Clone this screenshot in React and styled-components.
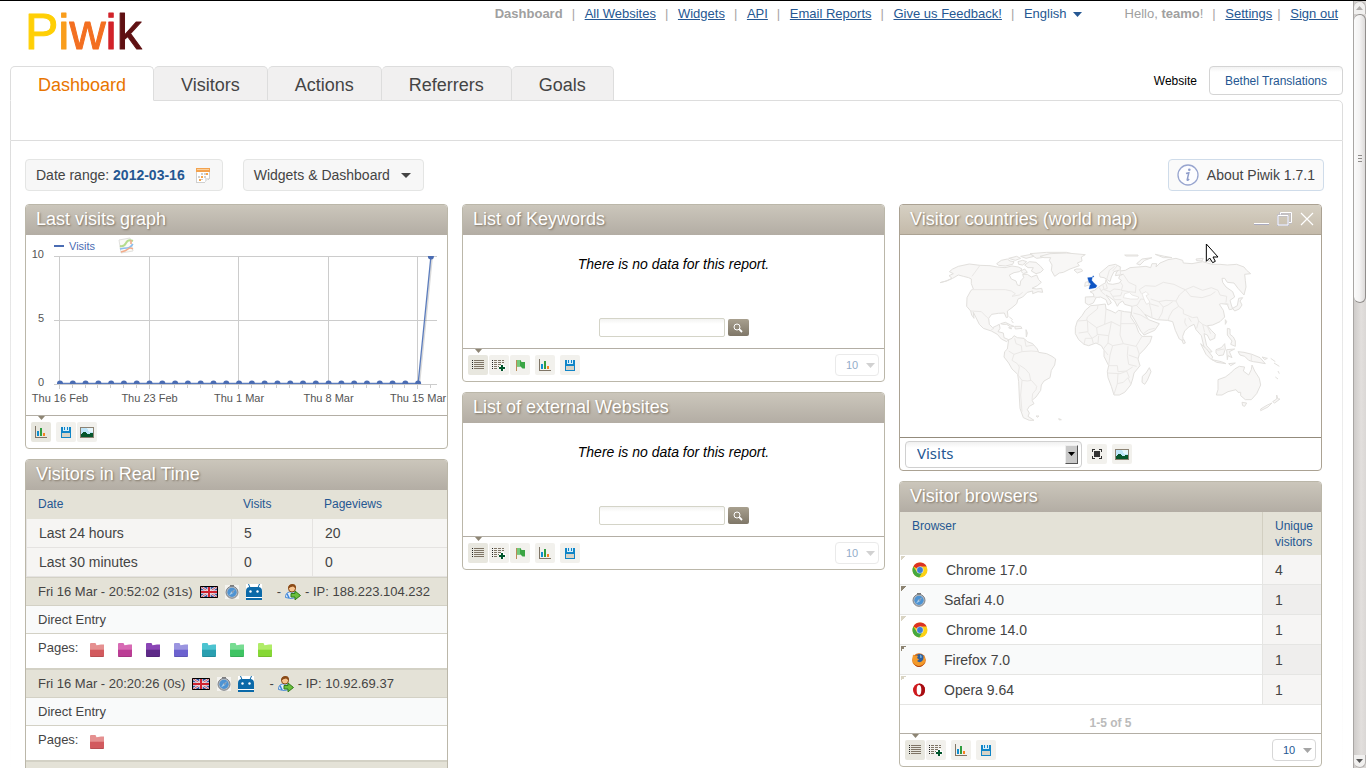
import React from "react";
import styled, { createGlobalStyle, css } from "styled-components";

const GlobalStyle = createGlobalStyle`
  *, *::before, *::after { box-sizing: border-box; }
  body {
    margin: 0;
    background: #fff;
    color: #444;
    font-family: "Liberation Sans", Arial, sans-serif;
    font-size: 14px;
  }
  button, input, select { font-family: inherit; margin: 0; }
  svg { display: block; flex: none; }
`;

/* ---------- page frame ---------- */

const Shell = styled.div`
  display: flex;
  height: 100vh;
  overflow: hidden;
  border-top: 1px solid #000;
`;

const Page = styled.div`
  flex: 1;
  min-width: 0;
  padding: 0 10px;
`;

const ScrollRail = styled.div`
  width: 13px;
  flex: none;
  display: flex;
  flex-direction: column;
  border-left: 1px solid #a9a6a4;
  background: linear-gradient(90deg, #cfccca, #e2dfdd 60%, #dad7d5);
`;

const RailButton = styled.div`
  height: 13px;
  display: flex;
  align-items: center;
  justify-content: center;
  background: #f1f0ef;
  border: 1px solid #b5b2b0;
  border-width: ${(p) => (p.$end ? "0 1px 1px 0" : "1px 1px 0 0")};
  border-radius: ${(p) => (p.$end ? "0 0 6px 6px" : "6px 6px 0 0")};
`;

const RailTrack = styled.div`
  flex: 1;
`;

const RailThumb = styled.div`
  height: 39%;
  display: flex;
  flex-direction: column;
  align-items: center;
  justify-content: center;
  gap: 2px;
  border: 1px solid #918e8c;
  border-left: 0;
  border-radius: 6px;
  background: linear-gradient(90deg, #fbfbfb, #f4f3f3 50%, #dddbda);
`;

const Grip = styled.span`
  width: 4px;
  height: 1px;
  background: #8f8c8a;
`;

/* ---------- header ---------- */

const Header = styled.header`
  display: flex;
  justify-content: space-between;
  align-items: flex-start;
  height: 65px;
  padding: 0 5px 0 10px;
`;

const TopLinks = styled.nav`
  display: flex;
  align-items: center;
  padding-top: 5px;
  font-size: 13px;
  line-height: 16px;
  color: #a0a0a0;
`;

const TopGroup = styled.div`
  display: flex;
  align-items: center;
  gap: 9px;
`;

const UserGroup = styled(TopGroup)`
  margin-left: 43px;
`;

const TopLink = styled.a`
  color: #255792;
`;

const LanguageButton = styled.button`
  display: flex;
  align-items: center;
  gap: 6px;
  padding: 0;
  border: 0;
  background: none;
  color: #255792;
  font-size: 13px;
  line-height: 16px;
`;

const Bar = styled.span`
  color: #a9a3a3;
  width: 4px;
  margin-left: ${(p) => (p.$tight ? "-4px" : "0")};
`;

/* ---------- tabs ---------- */

const TabRow = styled.div`
  display: flex;
  justify-content: space-between;
  align-items: flex-start;
  position: relative;
  z-index: 1;
  margin-bottom: -1px;
`;

const Tabs = styled.nav`
  display: flex;
`;

const Tab = styled.a`
  height: 35px;
  padding: 0 27px;
  border: 1px solid #ddd;
  border-left-width: ${(p) => (p.$active ? "1px" : "0")};
  border-bottom-color: ${(p) => (p.$active ? "#fff" : "#ddd")};
  border-radius: 5px 5px 0 0;
  background: ${(p) => (p.$active ? "#fff" : "#f1f0f0")};
  color: ${(p) => (p.$active ? "#e87500" : "#444")};
  font-size: 18px;
  line-height: 36px;
  text-decoration: none;
`;

const SiteSelector = styled.div`
  display: flex;
  align-items: center;
  gap: 12px;
  font-size: 12px;
  color: #000;
`;

const SiteButton = styled.button`
  height: 29px;
  padding: 0 15px;
  border: 1px solid #d4d4d4;
  border-radius: 4px;
  background: linear-gradient(#f2f2f2, #fff 5px);
  color: #255792;
  font-size: 12px;
`;

/* ---------- content panel ---------- */

const SubBar = styled.div`
  height: 41px;
  border: 1px solid #ddd;
  border-top-right-radius: 5px;
`;

const Panel = styled.main`
  padding: 18px 20px 0 14px;
  border: 0 solid;
  border-width: 0 1px;
  border-image: linear-gradient(#ddd, #fff 630px) 1;
`;

const Toolbar = styled.div`
  display: flex;
  gap: 20px;
  margin: 0 -2px 13px 0;
`;

const ToolButton = styled.button`
  display: flex;
  align-items: center;
  gap: 11px;
  height: 32px;
  padding: 0 12px 0 10px;
  border: 1px solid ${(p) => (p.$info ? "#cfdcea" : "#e4e5e4")};
  border-radius: 4px;
  background: ${(p) => (p.$info ? "#fafafa" : "#f7f7f7")};
  color: #444;
  font-size: 14px;
  ${(p) => p.$info && css`
    gap: 8px;
    margin-left: auto;
    padding: 0 8px;
  `}
  b { color: #255792; }
`;

const Columns = styled.div`
  display: grid;
  grid-template-columns: repeat(3, minmax(0, 1fr));
  align-items: start;
  gap: 14px;
`;

const Column = styled.div`
  display: grid;
  gap: 10px;
`;

/* ---------- widgets ---------- */

const WidgetBox = styled.section`
  border: 1px solid ${(p) => (p.$hover ? "#aba293" : "#bbb7a9")};
  border-radius: 4px;
  overflow: hidden;
  background: #fff;
`;

const WidgetHead = styled.header`
  display: flex;
  align-items: center;
  justify-content: space-between;
  height: 30px;
  padding: 0 7px 2px 10px;
  background: ${(p) =>
    p.$hover
      ? "linear-gradient(#d6d0c3, #c4baaa)"
      : "linear-gradient(#cbc6bb, #b3ada4)"};
  ${(p) => p.$hover && css`
    padding-bottom: 1px;
    border-bottom: 1px solid #aba293;
  `}
`;

const WidgetTitle = styled.h2`
  margin: 0;
  color: #fff;
  font-size: 18px;
  font-weight: normal;
  line-height: 24px;
  text-shadow: 1px 1px 2px #7e7363;
`;

const WindowButtons = styled.div`
  display: flex;
  align-items: center;
  gap: 8px;
`;

const PlainButton = styled.button`
  display: block;
  padding: 0;
  border: 0;
  background: none;
`;

const Footer = styled.footer`
  position: relative;
  display: flex;
  align-items: center;
  gap: 5px;
  height: 33px;
  padding: 0 5px;
  border-top: 1px solid ${(p) => (p.$hover ? "#938b7c" : "#b3aea5")};
`;

const ActiveMark = styled.svg`
  position: absolute;
  left: 12px;
  top: 0;
`;

const IconGroup = styled.div`
  display: flex;
  gap: 1px;
`;

const IconButton = styled.button`
  display: flex;
  align-items: center;
  justify-content: center;
  width: 20px;
  height: 20px;
  padding: 0;
  border: 0;
  border-radius: 2px;
  background: ${(p) => (p.$active ? "#e8e7df" : "#f2f1ed")};
`;

const LimitWrap = styled.div`
  position: relative;
  margin-left: auto;
  opacity: ${(p) => (p.$dim ? 0.5 : 1)};
`;

const LimitSelect = styled.select`
  display: block;
  appearance: none;
  width: 44px;
  height: 22px;
  padding: 0 0 1px 10px;
  border: 1px solid #d7d7d7;
  border-radius: 4px;
  background: #fff;
  color: #255792;
  font-size: 11px;
  opacity: 1;
`;

const LimitArrow = styled.svg`
  position: absolute;
  right: 4px;
  top: 9px;
  pointer-events: none;
`;

const EmptyBody = styled.div`
  display: flex;
  flex-direction: column;
  align-items: center;
  justify-content: space-between;
  height: 113px;
  padding: 20px 0 11px;
  color: #000;
`;

const EmptyText = styled.em`
  line-height: 18px;
`;

const SearchForm = styled.form`
  display: flex;
  align-items: center;
  gap: 3px;
`;

const SearchInput = styled.input`
  width: 126px;
  height: 19px;
  padding: 0 4px;
  border: 1px solid #d4d4c8;
  border-radius: 2px;
  background: linear-gradient(#f3f3f1, #fff 5px);
  font-size: 12px;
`;

const SearchButton = styled.button`
  display: flex;
  align-items: center;
  justify-content: center;
  width: 21px;
  height: 17px;
  padding: 0;
  border: 0;
  border-radius: 2px;
  background: linear-gradient(#a8a08f, #7f7768);
`;

const Table = styled.table`
  width: 100%;
  table-layout: fixed;
  border-collapse: separate;
  border-spacing: 0;
  text-align: left;
`;

const HeadCell = styled.th`
  width: ${(p) => p.$width || "auto"};
  height: ${(p) => (p.$tall ? "43px" : "29px")};
  padding: 6px 0 0 12px;
  border-left: ${(p) => (p.$divided ? "1px solid #d2cfc1" : "0")};
  background: #e4e2d7;
  color: #255792;
  font-size: 12px;
  font-weight: normal;
  line-height: 16px;
  vertical-align: top;
`;

const SummaryCell = styled.td`
  height: 29px;
  padding: 0 0 0 12px;
  border: 0 solid #e5e3e1;
  border-width: 0 0 1px 1px;
  background: #f6f5f3;
  line-height: 16px;
`;

const BrowserRow = styled.tr`
  td {
    height: 30px;
    padding: 0 0 0 12px;
    border-bottom: 1px solid #e5e5e3;
    line-height: 16px;
  }
  td:first-child {
    background:
      linear-gradient(135deg, ${(p) => (p.$even ? "#8d8472" : "#d9d4c3")} 50%, transparent 50%) 1px 1px / 5px 5px no-repeat,
      ${(p) => (p.$even ? "#f9fafa" : "#fff")};
  }
  td:last-child {
    border-left: 1px solid #e5e5e3;
    background: ${(p) => (p.$even ? "#efeeed" : "#f6f5f4")};
  }
`;

const BrowserName = styled.span`
  display: flex;
  align-items: center;
  gap: 18px;
`;

const Pager = styled.div`
  height: 28px;
  padding: 10px 0 0;
  color: #bbb;
  font-size: 12px;
  font-weight: bold;
  line-height: 16px;
  text-align: center;
`;

const Visit = styled.article`
  border-top: 1px solid #d3d1c5;
  font-size: 13px;
  line-height: 16px;
`;

const VisitLine = styled.div`
  display: flex;
  align-items: center;
  gap: 7px;
  height: 28px;
  padding: 0 12px;
  border-bottom: 1px solid #d3d1c5;
  white-space: nowrap;
  background: ${(p) => (p.$head ? "#e4e2d7" : "#f9fafa")};
`;

const Visitor = styled.span`
  display: flex;
  align-items: center;
  gap: 4px;
  margin-left: 8px;
`;

const PagesLine = styled.div`
  display: flex;
  align-items: flex-start;
  gap: 12px;
  height: 35px;
  padding: 6px 12px 0;
  border-bottom: 1px solid #d3d1c5;
`;

const Folders = styled.div`
  display: flex;
  gap: 14px;
  padding-top: 3px;
`;

const MetricWrap = styled.div`
  position: relative;
`;

const MetricSelect = styled.select`
  display: block;
  appearance: none;
  width: 177px;
  height: 27px;
  padding: 0 0 2px 11px;
  border: 1px solid #d0d0d0;
  border-radius: 4px;
  background: linear-gradient(#f0f0f0, #fff 6px);
  color: #255792;
  font-family: "Noto Sans", sans-serif;
  font-size: 15px;
`;

const MetricArrow = styled.span`
  position: absolute;
  right: 4px;
  top: 4px;
  display: flex;
  align-items: center;
  justify-content: center;
  width: 13px;
  height: 19px;
  border: 1px solid;
  border-color: #eee #555 #555 #eee;
  background: #c9c9c9;
  pointer-events: none;
`;

/* ---------- small drawings ---------- */

const Triangle = ({ color, width = 9, height = 5 }) => (
  <svg width={width} height={height} viewBox="0 0 10 5" preserveAspectRatio="none" aria-hidden="true">
    <path d="M0 0h10L5 5z" fill={color} />
  </svg>
);

const Logo = () => (
  <svg width="130" height="62" viewBox="20 0 130 62" role="img" aria-label="Piwik">
    <text x="25" y="48" fontFamily="Liberation Sans, Arial, sans-serif" fontSize="50" strokeWidth="1" strokeLinejoin="round">
      <tspan fill="#ffcf05" stroke="#ffcf05">P</tspan>
      <tspan fill="#f99d1c" stroke="#f99d1c">i</tspan>
      <tspan fill="#f36f21" stroke="#f36f21">w</tspan>
      <tspan fill="#d2232a" stroke="#d2232a">i</tspan>
      <tspan fill="#5f1012" stroke="#5f1012">k</tspan>
    </text>
  </svg>
);

const CalendarIcon = () => (
  <svg width="14" height="16" viewBox="0 0 14 16" shapeRendering="crispEdges" aria-hidden="true">
    <path d="M.5 1v14h8.500l4.500-4V1z" fill="#fff" stroke="#cfcfcf" />
    <path d="M0 1h14v4H0z" fill="#f3a24e" />
    <path d="M1 2h12v1H1z" fill="#fbd09c" />
    <path d="M5 6h2v2H5zM8 6h2v2H8zM2 9h2v2H2zM8 9h2v2H8zM5 12h2v1H5z" fill="#cfcfcf" />
    <path d="M10 6h2v2h-2zM5 9h2v2H5zM3 12h2v2H3z" fill="#f5a54b" />
    <path d="M13 11H9v4z" fill="#e2e2e2" />
  </svg>
);

const InfoIcon = () => (
  <svg width="22" height="22" viewBox="0 0 22 22" aria-hidden="true">
    <circle cx="11" cy="11" r="10" fill="#fdfdff" stroke="#98a5cf" strokeWidth="1.3" />
    <circle cx="12.3" cy="5.7" r="1.3" fill="#8e9cca" />
    <path d="M9 9.5l2.8-.8-1.6 7.2q0 1 2-.8" fill="none" stroke="#8e9cca" strokeWidth="1.5" />
  </svg>
);

const TableIcon = () => (
  <svg width="12" height="10" viewBox="0 0 12 10" shapeRendering="crispEdges" aria-hidden="true">
    <path d="M0 .5h1M0 2.500h1M0 4.500h1M0 6.500h1M0 8.500h1" stroke="#222" />
    <path d="M2 .5h10M2 2.500h10M2 4.500h10M2 6.500h10M2 8.500h10" stroke="#7f7566" />
  </svg>
);

const TablePlusIcon = () => (
  <svg width="14" height="12" viewBox="0 0 14 12" shapeRendering="crispEdges" aria-hidden="true">
    <path d="M0 1.500h1M0 3.500h1M0 5.500h1M0 7.500h1M0 9.500h1" stroke="#222" />
    <path d="M2 1.500h3m1 0h3m1 0h2M2 3.500h3m1 0h3m1 0h2M2 5.500h3m1 0h3m1 0h2M2 7.500h3m1 0h1M2 9.500h3" stroke="#7f7566" />
    <path d="M7 7h2V5h3v2h2v3h-2v2H9v-2H7z" fill="#fff" />
    <path d="M7 9h6M10 6v6" stroke="#00552b" strokeWidth="2" />
  </svg>
);

const FlagIcon = () => (
  <svg width="10" height="12" viewBox="0 0 10 12" aria-hidden="true">
    <path d="M1.500 1v11" stroke="#b98a55" strokeWidth="1" />
    <path d="M2 1h3.500l1 2H10v6.500H7.500l-2-2H2z" fill="#3aa544" />
    <path d="M2 1h3v6.500H2z" fill="#74c878" />
  </svg>
);

const BarsIcon = () => (
  <svg width="12" height="12" viewBox="0 0 12 12" shapeRendering="crispEdges" aria-hidden="true">
    <path d="M.5 0v11.500H12" fill="none" stroke="#7f7566" />
    <path d="M2 5h2v5H2z" fill="#0f8fd0" />
    <path d="M5 2h2v8H5z" fill="#2f9d3f" />
    <path d="M8 7h2v3H8z" fill="#f58220" />
  </svg>
);

const SaveIcon = () => (
  <svg width="10" height="11" viewBox="0 0 10 11" shapeRendering="crispEdges" aria-hidden="true">
    <path d="M0 0h10v11H0z" fill="#1085c7" />
    <path d="M2 0h6v4H2z" fill="#d6eefb" />
    <path d="M3 0h1v3H3zM6 0h1v3H6z" fill="#1085c7" />
    <path d="M1 6h8v4H1z" fill="#d7d3c6" />
  </svg>
);

const ImageIcon = () => (
  <svg width="14" height="11" viewBox="0 0 14 11" shapeRendering="crispEdges" aria-hidden="true">
    <path d="M.5.5h13v10H.5z" fill="#bfe6fa" stroke="#8c8273" />
    <path d="M7 1h6v4H9z" fill="#e6f6fd" />
    <path d="M1 7l2-2h2l2 2 2 0 1-1h2l1 1v3H1z" fill="#06562c" />
  </svg>
);

const FullscreenIcon = () => (
  <svg width="10" height="10" viewBox="0 0 10 10" shapeRendering="crispEdges" aria-hidden="true">
    <path d="M.5 3V.5H3M7 .5h2.500V3M9.500 7v2.500H7M3 9.500H.5V7" fill="none" stroke="#333" />
    <path d="M2 2h6v6H2z" fill="#333" />
  </svg>
);

const SearchIcon = () => (
  <svg width="10" height="10" viewBox="0 0 10 10" aria-hidden="true">
    <circle cx="4" cy="4" r="3" fill="none" stroke="#fff" />
    <path d="M6.200 6.200L9 9" stroke="#fff" strokeWidth="1.800" />
  </svg>
);

const MinimiseIcon = () => (
  <svg width="15" height="14" viewBox="0 0 15 14" aria-hidden="true">
    <path d="M0 12.500h15" stroke="#a9a9bd" />
    <path d="M0 11.500h15" stroke="#fff" />
  </svg>
);

const RestoreIcon = () => (
  <svg width="15" height="14" viewBox="0 0 15 14" aria-hidden="true">
    <path d="M3.500 3V.5h11v10H12" fill="none" stroke="#b7b7c9" strokeWidth="2" />
    <path d="M3.500 3V.5h11v10H12" fill="none" stroke="#fff" />
    <path d="M1 3.500h10v9.500H1z" fill="none" stroke="#b7b7c9" strokeWidth="2" />
    <path d="M1 3.500h10v9.500H1z" fill="none" stroke="#fff" />
  </svg>
);

const CloseIcon = () => (
  <svg width="14" height="14" viewBox="0 0 14 14" aria-hidden="true">
    <path d="M1 1l12 12M13 1L1 13" stroke="#fff" strokeWidth="1.200" />
  </svg>
);

const UkFlag = () => (
  <svg width="18" height="12" viewBox="0 0 18 12" role="img" aria-label="United Kingdom">
    <path d="M0 0h18v12H0z" fill="#34509c" />
    <path d="M0 0l18 12M18 0L0 12" stroke="#dfe2ee" strokeWidth="2.400" />
    <path d="M0 0l18 12M18 0L0 12" stroke="#d3515c" strokeWidth="1" />
    <path d="M9 0v12M0 6h18" stroke="#f0dfe4" strokeWidth="3.400" />
    <path d="M9 0v12M0 6h18" stroke="#cf2330" strokeWidth="2" />
    <path d="M.5.5h17v11H.5z" fill="none" stroke="#000" />
  </svg>
);

const SafariIcon = () => (
  <svg width="14" height="14" viewBox="0 0 14 14" role="img" aria-label="Safari">
    <path d="M0 0h14v14H0z" fill="#fff" opacity=".6" />
    <path d="M5 .8h4" stroke="#777" strokeWidth="1.500" />
    <circle cx="7" cy="7.300" r="6" fill="#b4bac1" stroke="#7d8186" />
    <circle cx="7" cy="7.300" r="4.600" fill="#4d93d3" />
    <path d="M10 4.500L7.800 8.200 4 10.500l2.300-3.800z" fill="#a9cdea" />
    <path d="M10 4.500L7.800 8.200 6.300 6.700z" fill="#8196ae" />
  </svg>
);

const AndroidIcon = () => (
  <svg width="16" height="16" viewBox="0 0 16 16" role="img" aria-label="Android">
    <path d="M0 0h16v16H0z" fill="#fff" />
    <path d="M2.500 0L4 3.500M13.500 0L12 3.500" stroke="#0b69a8" />
    <path d="M0 13V7q0-4 4-4h8q4 0 4 4v6zM0 14h16v2H0z" fill="#0b69a8" />
    <circle cx="4.500" cy="7.500" r="1.200" fill="#fff" />
    <circle cx="11.500" cy="7.500" r="1.200" fill="#fff" />
  </svg>
);

const PersonIcon = () => (
  <svg width="16" height="16" viewBox="0 0 16 16" role="img" aria-label="Returning visitor">
    <path d="M.5 13.500q0-5 4-5.500h4q3 1 3 5.500-5 2-11 0z" fill="#e3effb" stroke="#4a8ad0" />
    <path d="M2 9.500l2 4.500" stroke="#3b86dd" strokeWidth="1.500" />
    <circle cx="7" cy="4.500" r="3.500" fill="#f7c48f" stroke="#8a4a17" />
    <path d="M3 5q0-5 4.500-5 4 0 3.500 5-1-2-3-2.500Q5 2.500 3 5z" fill="#8a4a17" />
    <path d="M6 9.500h4V7l5.500 4.500L10 15.800V13H6z" fill="#6cbf3c" stroke="#2f7d18" />
  </svg>
);

const Folder = ({ top, base }) => {
  const id = `folder-${base.slice(1)}`;
  return (
    <svg width="14" height="14" viewBox="0 0 14 14" aria-hidden="true">
      <linearGradient id={id} x1="0" y1="0" x2="0" y2="1">
        <stop offset="0" stopColor={top} />
        <stop offset=".45" stopColor={top} />
        <stop offset=".5" stopColor={base} />
        <stop offset="1" stopColor={base} />
      </linearGradient>
      <path d="M0 1q0-1 1-1h4.500l1 2.200 4.500-.7h3V13q0 1-1 1H1q-1 0-1-1z" fill={`url(#${id})`} />
      <path d="M0 13.500h14" stroke="#000" opacity=".12" />
    </svg>
  );
};

const ChromeIcon = () => (
  <svg width="16" height="16" viewBox="0 0 16 16" role="img" aria-label="Chrome">
    <circle cx="8" cy="8" r="7.500" fill="#fbd116" />
    <path d="M8 8L1.300 4.500A7.500 7.500 0 0 1 14.700 4.600H8z" fill="#dc3224" />
    <path d="M1.300 4.500A7.500 7.500 0 0 0 7.300 15.500L10.500 10 5 10z" fill="#46a83f" />
    <circle cx="8" cy="8" r="3.500" fill="#dfe9f3" />
    <circle cx="8" cy="8" r="2.900" fill="#3b7fd6" />
  </svg>
);

const FirefoxIcon = () => (
  <svg width="14" height="14" viewBox="0 0 14 14" role="img" aria-label="Firefox">
    <circle cx="7" cy="7" r="6.800" fill="#d8701a" />
    <circle cx="7.800" cy="5.300" r="4.400" fill="#2d5f9e" />
    <path d="M8 1.500q2 1 2 3L8 5z" fill="#6fa8d8" />
    <path d="M1 1.500l2 1.500q2-1 3 0L5 5l2 1.500L5 8q2 2 4.500.5Q12 7 11.500 2q2.500 4 1.500 7-2 4.500-7 4Q1 12.500.5 8 .3 5 1 1.500z" fill="#f39a2b" />
    <path d="M1 9q2 4 6 4t6-4q-2 5-6 5T1 9z" fill="#b0420f" />
  </svg>
);

const OperaIcon = () => (
  <svg width="14" height="14" viewBox="0 0 14 14" role="img" aria-label="Opera">
    <ellipse cx="7" cy="7" rx="6" ry="6.500" fill="#cf1a1e" />
    <path d="M7 .5q6 .5 6 6.500t-6 6.500z" fill="#a80d12" />
    <ellipse cx="7" cy="7" rx="2.300" ry="5" fill="#fff" />
  </svg>
);

const ChartThumb = () => (
  <>
    <path d="M119 240l11-2 3 13-12 2z" fill="#fafaf7" stroke="#e2e2df" />
    <path d="M120 246q4 1 6-3t7-2" fill="none" stroke="#b5dc8e" strokeWidth="2" />
    <path d="M120 249q4-1 7-1t6-4" fill="none" stroke="#8abdee" strokeWidth="1.500" />
    <path d="M121 252q5-1 7-3t5 0M131 240v4" fill="none" stroke="#f2ab8a" strokeWidth="1.500" />
  </>
);

/* ---------- visits chart ---------- */

const ChartSvg = styled.svg`
  width: 100%;
  height: auto;
  text { font-size: 11px; fill: #545454; }
`;

const FIRST_X = 60;
const STEP = 12.79;
const visits = [...Array(29).fill(0), 10];
const pointX = (i) => FIRST_X + i * STEP;
const pointY = (v) => 383.5 - v * 12.7;
const gridX = (i) => Math.floor(pointX(i) - 0.5) + 0.5;
const weekTicks = ["Thu 16 Feb", "Thu 23 Feb", "Thu 1 Mar", "Thu 8 Mar", "Thu 15 Mar"];

const VisitsChart = () => (
  <ChartSvg viewBox="26 235 421 180" role="img" aria-label="Last visits graph">
    <clipPath id="plot"><rect x="50" y="256" width="392" height="128" /></clipPath>
    <path d="M54 246h10" stroke="#4a6cb3" strokeWidth="2" />
    <text x="69" y="250" style={{ fill: "#4a6cb3" }}>Visits</text>
    <ChartThumb />
    <g stroke="#ccc" shapeRendering="crispEdges">
      {[256.5, 320.5, 384.5].map((y) => <path key={y} d={`M54 ${y}H437`} />)}
      {weekTicks.map((t, i) => <path key={t} d={`M${gridX(i * 7)} 256V389`} />)}
      {visits.map((_, i) => <path key={i} d={`M${gridX(i)} 384v4`} />)}
    </g>
    <g textAnchor="end">
      <text x="44" y="258">10</text>
      <text x="44" y="322">5</text>
      <text x="44" y="386">0</text>
    </g>
    <g textAnchor="middle">
      {weekTicks.map((t, i) => <text key={t} x={pointX(i * 7)} y="402">{t}</text>)}
    </g>
    <g clipPath="url(#plot)">
      <polyline
        points={visits.map((v, i) => `${pointX(i) + 1},${pointY(v) + 1}`).join(" ")}
        fill="none" stroke="#000" strokeOpacity=".15" strokeWidth="2"
      />
      <polyline
        points={visits.map((v, i) => `${pointX(i)},${pointY(v)}`).join(" ")}
        fill="none" stroke="#5b7cbd" strokeWidth="1.300"
      />
      {visits.map((v, i) => <circle key={i} cx={pointX(i)} cy={pointY(v)} r="3" fill="#4a6cb3" />)}
    </g>
  </ChartSvg>
);

/* ---------- world map ---------- */

const MapSvg = styled.svg`
  width: 100%;
  height: auto;
`;

const land = [
  // North America
  "M150 263L168 258 186 250 177 242 190 236 178 230 188 222 205 214 238 207 270 211 300 212 322 216 345 218 366 213 385 216 396 222 388 230 372 233 358 240 364 252 378 258 382 270 390 272 392 258 401 248 398 238 412 238 424 246 440 240 446 254 454 262 442 272 426 280 440 282 455 280 458 292 444 290 428 296 428 288 412 292 398 306 384 312 380 326 366 338 352 348 354 366 349 368 343 354 325 355 305 358 296 370 298 388 308 398 320 392 328 388 330 400 324 410 340 414 342 428 356 434 350 440 334 432 322 418 304 408 280 400 268 388 258 368 250 352 252 370 245 360 242 348 230 334 231 308 243 286 250 282 244 266 244 252 236 248 220 244 205 240 188 250 170 258z",
  // Arctic islands
  "M320 206L334 196 352 192 360 198 372 200 368 208 346 213 326 211zM356 190L380 184 392 190 376 196zM384 200L398 196 410 200 398 210 386 208zM392 184L424 178 432 184 408 190zM420 176L470 172 530 172 545 176 500 182 468 186 440 190 430 184zM404 210L418 200 438 202 452 214 460 224 452 232 438 236 424 228 430 218 414 218zM392 228L404 222 412 232 400 236z",
  // Greenland and Iceland
  "M450 184L480 176 530 174 586 179 574 186 576 198 562 204 568 212 540 222 520 232 508 234 494 244 484 226 486 210 478 196 482 188 462 188zM552 225L560 222 574 222 578 228 562 234z",
  // Caribbean
  "M332 386L346 382 362 390 372 394 362 396 350 388 338 388zM374 394L392 394 396 400 376 402zM356 398l8 1v3zM408 404l4 10-3 12zM358 366l10 8M364 376l6 8",
  // South America
  "M356 434L366 430 372 422 382 428 402 430 412 440 428 446 442 462 446 472 470 476 486 484 497 492 494 510 484 526 480 548 462 558 454 570 452 586 438 606 426 616 432 626 418 634 412 644 418 654 414 664 432 676 418 676 400 668 390 640 388 606 386 560 383 538 366 522 356 504 342 486 344 470 352 462zM438 663h9l-4 4zM506 671l8 3-6 1z",
  // Africa and Madagascar
  "M602 332L624 330 646 327 648 342 664 348 676 354 686 346 704 350 724 352 722 366 738 390 746 412 756 424 786 424 780 442 764 462 748 478 744 492 750 512 732 534 728 552 722 570 704 592 688 600 672 600 664 574 654 548 652 530 656 512 642 484 642 466 634 452 618 444 596 452 582 448 566 434 556 416 556 398 562 378 576 362 586 346zM778 518L783 530 772 556 764 568 756 562 757 544 768 534z",
  // Europe and Asia
  "M586 306L612 305 610 296 600 290 614 286 626 276 638 268 646 264 648 254 654 266 668 268 688 264 694 256 686 250 690 240 700 238 676 242 680 230 686 226 672 230 664 246 660 260 652 254 642 248 630 246 628 236 642 224 656 212 676 208 692 216 690 228 706 226 720 218 744 216 768 214 782 218 786 206 800 206 798 216 810 204 834 194 858 190 878 196 880 204 906 206 938 200 966 208 990 208 1012 210 1040 208 1062 216 1070 226 1082 236 1064 238 1066 256 1068 276 1062 300 1044 280 1032 264 1012 262 1004 250 996 250 998 262 1008 276 1028 290 1034 306 1020 316 1024 330 1028 342 1018 344 1012 328 994 326 988 328 1000 346 1004 366 990 380 968 390 952 392 964 406 976 418 974 430 960 436 952 420 942 416 950 452 966 470 958 472 942 456 934 422 918 404 912 388 896 396 884 408 878 424 880 438 868 432 856 406 848 380 832 376 800 374 784 368 764 358 776 374 792 380 808 386 794 406 762 420 752 408 736 378 724 358 726 334 704 328 698 318 688 324 682 334 674 318 658 306 648 300 660 316 664 324 654 330 648 314 632 306 618 308 610 324 596 330 586 324z",
  // Arctic Russia
  "M704 180h40v3h-36zM796 178L824 184 846 188 820 188zM740 206L756 192 786 188 764 196 750 210zM918 192L940 190 936 198 920 197zM950 196l22 0-10 5z",
  // Ireland, Japan, Sri Lanka, Taiwan
  "M586 262L594 260 598 270 584 274zM1046 310L1058 308 1050 318 1056 330 1048 342 1034 348 1028 340 1042 332zM876 436l6-2 4 10-6 2zM1006 374l4 6-4 8z",
  // South-east Asia
  "M932 446L950 462 968 486 964 494 948 478zM966 494L994 500 1008 506 980 502zM978 464L994 458 1004 446 1006 462 1000 480 986 482 978 474zM1010 464L1034 462 1018 470 1026 488 1014 482 1012 494zM1012 400L1020 402 1020 418 1030 426 1036 438 1036 454 1022 448 1026 438 1012 420zM1044 470L1062 472 1086 478 1110 488 1126 506 1104 502 1090 500 1076 496 1064 484 1050 480zM1016 506l20-2-14 8zM1116 486l16 4-8 4zM1142 490l14 10M1152 504l16 10M1156 546l8 6M1164 528l4 8",
  // Australia, Tasmania, New Zealand
  "M984 554L1006 546 1022 534 1034 522 1048 514 1064 516 1060 528 1076 540 1084 524 1086 510 1094 528 1108 550 1112 570 1100 596 1084 614 1066 614 1052 602 1052 592 1044 592 1038 584 1014 590 996 600 979 600 984 584zM1056 622L1070 624 1064 634 1058 632zM1160 600L1164 612 1170 612 1154 624 1148 620 1160 612zM1146 624L1134 636 1112 647 1112 642 1132 630z",
];

const borders = [
  "M270 211L246 244 M246 284H346L364 288 376 296 366 304 388 300 398 292 M243 348L274 350 290 366 297 372 M304 404l8-4",
  "M374 430L378 446 394 452 396 470 372 478 356 468 M404 432L408 454 432 450 M446 470L424 468 396 470 M372 478L366 496 382 506 388 516 384 540 M388 510L406 522 418 536 422 556 M384 540L396 556 412 558 424 556 440 574 438 584 428 596 426 614 M396 556L392 600 396 650",
  "M562 378L590 376 592 366 622 342 624 330 M590 376L620 398 644 388 648 342 M592 376L594 410 566 414 M644 388L664 380 692 394 694 350 M692 386H736 M620 398L622 420 606 430 594 412 M622 418L656 422 660 404 664 380 M692 394L690 420 700 446 738 454 M656 422L654 444 640 462 M582 448L586 430 606 430 610 446 M624 444L626 422 M738 454L756 424 M654 444L668 452 700 446 M668 452L660 480 656 512 682 512 684 530 710 528 M714 454L712 482 716 508 740 514 M740 454L748 478 M744 490L716 480 M652 534L690 536 706 530 728 516 M684 536L682 566 700 562 714 548 722 566 M682 566L672 598 M710 528L718 548 M640 462L654 480",
  "M612 306L630 308 M628 278L636 292 646 300 M638 268L642 282 632 288 M648 266L652 280 642 284 660 290 672 282 692 284 M692 262L698 272 694 286 716 290 736 292 M690 216L692 242 M668 228L682 212 M650 254L658 226 674 214 M660 292L668 304 692 302 696 290 M668 304L674 314 694 314 M700 238L716 262 738 272 736 294",
  "M754 296L748 284 766 272 796 274 820 262 852 268 876 280 886 284 910 274 938 286 964 278 984 286 990 300 1010 304 1008 322 M886 284L902 304 936 308 962 300 976 290 M886 284L868 300 858 318 828 316 806 320 782 312 M858 318L866 334 880 344 880 356 908 368 922 366 926 378 920 400 M866 334L848 346 838 364 834 376 M806 320L820 336 834 330 848 320 M820 336L816 354 806 372 M778 326L784 350 786 368 M778 326L806 334 M738 330L752 344 764 358 M726 334L742 330 752 312 774 314 M730 354L752 360 776 374 M760 416L776 404 794 400 M896 368L904 380 M926 378L938 388 944 412 M938 388L952 394 962 416 M1004 324l12 4 M886 370L884 382 890 394",
  "M1084 478V500 M982 466l20-4",
];

const WorldMap = () => (
  <MapSvg viewBox="30 120 1263 606" role="img" aria-label="World map of visits">
    <g fill="#f8f7f6" stroke="#e2e0dd" strokeWidth="3" strokeLinejoin="round">
      {land.map((d) => <path key={d} d={d} />)}
    </g>
    <g fill="none" stroke="#eae8e6" strokeWidth="3" strokeLinejoin="round">
      {borders.map((d) => <path key={d} d={d} />)}
    </g>
    <g fill="#fff" stroke="#e2e0dd" strokeWidth="2">
      <path d="M700 308L704 296 718 292 726 300 746 306 744 312 722 312z" />
      <path d="M756 296L768 290 776 298 768 302 780 322 770 328 764 318z" />
    </g>
    <path d="M593 248L607 247 605 256 611 263 621 272 617 278 597 282 600 270 603 268 597 262 595 256zM608 243h4l-3 4z" fill="#0f55c4" stroke="#0f55c4" strokeWidth="1" />
    <path d="M949 147V199L959 189 968 203 976 199 969 186H984z" fill="#fff" stroke="#000" strokeWidth="3" />
  </MapSvg>
);

/* ---------- composed parts ---------- */

const Widget = ({ title, hover, children }) => (
  <WidgetBox $hover={hover}>
    <WidgetHead $hover={hover}>
      <WidgetTitle>{title}</WidgetTitle>
      {hover && (
        <WindowButtons>
          <PlainButton aria-label="Minimise"><MinimiseIcon /></PlainButton>
          <PlainButton aria-label="Maximise"><RestoreIcon /></PlainButton>
          <PlainButton aria-label="Close"><CloseIcon /></PlainButton>
        </WindowButtons>
      )}
    </WidgetHead>
    {children}
  </WidgetBox>
);

const Mark = () => (
  <ActiveMark width="7" height="4" viewBox="0 0 7 4" aria-hidden="true">
    <path d="M0 0h7L3.500 4z" fill="#8d8574" />
  </ActiveMark>
);

const Limit = ({ disabled }) => (
  <LimitWrap $dim={disabled}>
    <LimitSelect aria-label="Rows to display" disabled={disabled}><option>10</option></LimitSelect>
    <LimitArrow width="9" height="5" viewBox="0 0 9 5" aria-hidden="true">
      <path d="M0 0h9L4.500 5z" fill="#a5a5a5" />
    </LimitArrow>
  </LimitWrap>
);

const ReportFooter = ({ goals, disabled }) => (
  <Footer>
    <Mark />
    <IconGroup>
      <IconButton $active aria-label="Simple table"><TableIcon /></IconButton>
      <IconButton aria-label="Table with more data"><TablePlusIcon /></IconButton>
      {goals && <IconButton aria-label="Table with goals"><FlagIcon /></IconButton>}
    </IconGroup>
    <IconButton aria-label="Graphs"><BarsIcon /></IconButton>
    <IconButton aria-label="Export"><SaveIcon /></IconButton>
    <Limit disabled={disabled} />
  </Footer>
);

const EmptyReport = ({ title }) => (
  <Widget title={title}>
    <EmptyBody>
      <EmptyText>There is no data for this report.</EmptyText>
      <SearchForm onSubmit={(e) => e.preventDefault()}>
        <SearchInput type="text" aria-label={`Search ${title}`} />
        <SearchButton aria-label="Search"><SearchIcon /></SearchButton>
      </SearchForm>
    </EmptyBody>
    <ReportFooter goals disabled />
  </Widget>
);

const folderColours = [
  ["#e59090", "#d25a5e"],
  ["#d76ab4", "#bb3d95"],
  ["#8a45b5", "#5e2a88"],
  ["#9b95e0", "#6c62cf"],
  ["#4cc3d0", "#2a9fb0"],
  ["#77dc92", "#3fc463"],
  ["#b0ec68", "#86d834"],
];

const VisitEntry = ({ time, ip, pages }) => (
  <Visit>
    <VisitLine $head>
      <span>{time}</span>
      <UkFlag />
      <SafariIcon />
      <AndroidIcon />
      <Visitor>
        <span>-</span>
        <PersonIcon />
        <span>- IP: {ip}</span>
      </Visitor>
    </VisitLine>
    <VisitLine>Direct Entry</VisitLine>
    <PagesLine>
      <span>Pages:</span>
      <Folders>
        {folderColours.slice(0, pages).map(([top, base]) => <Folder key={base} top={top} base={base} />)}
      </Folders>
    </PagesLine>
  </Visit>
);

const browsers = [
  ["Chrome 17.0", 4, ChromeIcon],
  ["Safari 4.0", 1, SafariIcon],
  ["Chrome 14.0", 1, ChromeIcon],
  ["Firefox 7.0", 1, FirefoxIcon],
  ["Opera 9.64", 1, OperaIcon],
];

const topLinks = ["All Websites", "Widgets", "API", "Email Reports", "Give us Feedback!"];
const tabs = ["Dashboard", "Visitors", "Actions", "Referrers", "Goals"];

export default function App() {
  return (
    <>
      <GlobalStyle />
      <Shell>
        <Page>
          <Header>
            <Logo />
            <TopLinks>
              <TopGroup>
                <b>Dashboard</b>
                {topLinks.map((label) => (
                  <React.Fragment key={label}>
                    <Bar>|</Bar>
                    <TopLink href="#">{label}</TopLink>
                  </React.Fragment>
                ))}
                <Bar>|</Bar>
                <LanguageButton>English <Triangle color="#255792" /></LanguageButton>
              </TopGroup>
              <UserGroup>
                <span>Hello, <b>teamo</b>!</span>
                <Bar>|</Bar>
                <TopLink href="#">Settings</TopLink>
                <Bar $tight>|</Bar>
                <TopLink href="#">Sign out</TopLink>
              </UserGroup>
            </TopLinks>
          </Header>

          <TabRow>
            <Tabs>
              {tabs.map((label, i) => <Tab key={label} href="#" $active={i === 0}>{label}</Tab>)}
            </Tabs>
            <SiteSelector>
              <label htmlFor="site">Website</label>
              <SiteButton id="site">Bethel Translations</SiteButton>
            </SiteSelector>
          </TabRow>

          <SubBar />
          <Panel>
            <Toolbar>
              <ToolButton>
                <span>Date range: <b>2012-03-16</b></span>
                <CalendarIcon />
              </ToolButton>
              <ToolButton>
                Widgets &amp; Dashboard <Triangle color="#444" width={10} />
              </ToolButton>
              <ToolButton $info><InfoIcon /> About Piwik 1.7.1</ToolButton>
            </Toolbar>

            <Columns>
              <Column>
                <Widget title="Last visits graph">
                  <VisitsChart />
                  <Footer>
                    <Mark />
                    <IconButton $active aria-label="Graphs"><BarsIcon /></IconButton>
                    <IconGroup>
                      <IconButton aria-label="Export"><SaveIcon /></IconButton>
                      <IconButton aria-label="Export as image"><ImageIcon /></IconButton>
                    </IconGroup>
                  </Footer>
                </Widget>

                <Widget title="Visitors in Real Time">
                  <Table>
                    <thead>
                      <tr>
                        <HeadCell $width="205px">Date</HeadCell>
                        <HeadCell $width="81px">Visits</HeadCell>
                        <HeadCell>Pageviews</HeadCell>
                      </tr>
                    </thead>
                    <tbody>
                      <tr>
                        <SummaryCell>Last 24 hours</SummaryCell>
                        <SummaryCell>5</SummaryCell>
                        <SummaryCell>20</SummaryCell>
                      </tr>
                      <tr>
                        <SummaryCell>Last 30 minutes</SummaryCell>
                        <SummaryCell>0</SummaryCell>
                        <SummaryCell>0</SummaryCell>
                      </tr>
                    </tbody>
                  </Table>
                  <VisitEntry time="Fri 16 Mar - 20:52:02 (31s)" ip="188.223.104.232" pages={7} />
                  <VisitEntry time="Fri 16 Mar - 20:20:26 (0s)" ip="10.92.69.37" pages={1} />
                  <Visit><VisitLine $head /></Visit>
                </Widget>
              </Column>

              <Column>
                <EmptyReport title="List of Keywords" />
                <EmptyReport title="List of external Websites" />
              </Column>

              <Column>
                <Widget title="Visitor countries (world map)" hover>
                  <WorldMap />
                  <Footer $hover>
                    <MetricWrap>
                      <MetricSelect aria-label="Metric"><option>Visits</option></MetricSelect>
                      <MetricArrow><Triangle color="#000" width={7} height={4} /></MetricArrow>
                    </MetricWrap>
                    <IconButton aria-label="Full screen"><FullscreenIcon /></IconButton>
                    <IconButton aria-label="Export as image"><ImageIcon /></IconButton>
                  </Footer>
                </Widget>

                <Widget title="Visitor browsers">
                  <Table>
                    <thead>
                      <tr>
                        <HeadCell $tall>Browser</HeadCell>
                        <HeadCell $tall $divided $width="59px">Unique visitors</HeadCell>
                      </tr>
                    </thead>
                    <tbody>
                      {browsers.map(([name, count, Icon], i) => (
                        <BrowserRow key={name} $even={i % 2 === 1}>
                          <td><BrowserName><Icon /> {name}</BrowserName></td>
                          <td>{count}</td>
                        </BrowserRow>
                      ))}
                    </tbody>
                  </Table>
                  <Pager>1-5 of 5</Pager>
                  <ReportFooter />
                </Widget>
              </Column>
            </Columns>
          </Panel>
        </Page>

        <ScrollRail aria-hidden="true">
          <RailButton>
            <svg width="7" height="4" viewBox="0 0 7 4"><path d="M0 4h7L3.500 0z" fill="#b0adab" /></svg>
          </RailButton>
          <RailTrack>
            <RailThumb><Grip /><Grip /><Grip /></RailThumb>
          </RailTrack>
          <RailButton $end><Triangle color="#555" width={7} height={4} /></RailButton>
        </ScrollRail>
      </Shell>
    </>
  );
}
